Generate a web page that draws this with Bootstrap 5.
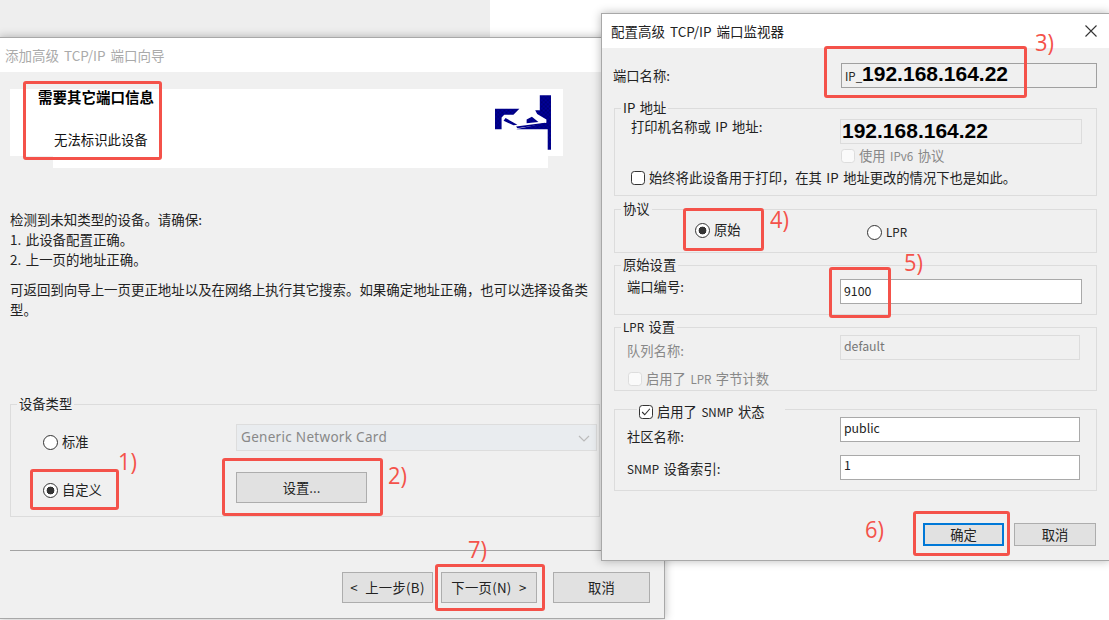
<!DOCTYPE html>
<html lang="zh">
<head>
<meta charset="utf-8">
<title>TCP/IP 端口</title>
<link href="https://cdn.jsdelivr.net/npm/bootstrap@5.3.0/dist/css/bootstrap.min.css" rel="stylesheet">
<style>
html,body{margin:0;height:100%;background:#fff;overflow:hidden}
body{font-family:"Noto Sans CJK SC","Liberation Sans",sans-serif;font-size:13.3px;line-height:16px;color:#222;word-spacing:1.5px}
.desk{width:1109px;height:620px;overflow:hidden}
.backwin{left:0;top:0;width:490px;height:37px;background:#eee}
.win{background:#f0f0f0;border:1px solid #a8a8a8;box-shadow:0 0 9px rgba(0,0,0,.28)}
.wiz{left:-1px;top:37px;width:666px;height:582px}
.dlg{left:601px;top:13px;width:509px;height:548px}
.tbar{background:#fff;height:34px;padding-top:9px;font-size:13.5px;word-spacing:2px}
.wiz .tbar{color:#aaa;padding-left:5px}
.dlg .tbar{color:#222;padding-left:9px;padding-right:12px}
.closex{width:12px;height:12px;margin-top:2px}
.banner{margin:17px 0 0 10px;width:553px;height:67px;background:#fff}
.strip{margin-left:53px;width:495px;height:12px;background:#fff}
.hd1{font-weight:700;font-size:14.5px;color:#000;margin:0 0 0 28px}
.hd2{font-size:13.4px;color:#111;margin:26px 0 0 44px}
.logo{width:56px;height:56px;margin:6px 12px 0 0}
.wizcopy{margin:41px 0 0 10px;width:590px;font-size:13.45px;line-height:20px}
.wizcopy p{margin:0}
.wizcopy p+p{margin-top:10px}
.gbox{border:1px solid #dcdcdc;position:relative}
.lgd{position:absolute;background:#f0f0f0;padding:0 2px;white-space:nowrap;left:6px;top:-9px}
.lat{font-size:11.6px}
.wgroup{margin:85px 0 0 10px;width:590px;height:113px;display:grid;grid-template-columns:225px 361px;grid-template-rows:27px 31px;row-gap:21px;padding-top:19px}
.rcell{padding-left:32px}
.rcell1{margin-top:10px}
.rcell2{margin-top:10px}
.wr,.wc{margin:0!important;width:14px;height:14px;flex:none;background-color:#fff;border:1px solid #333;border-radius:0;opacity:1!important;box-shadow:none!important}
.wr{border-radius:50%;width:15px;height:15px}
.wr:checked{background-color:#fff;border-color:#333;background-image:radial-gradient(circle,#333 0 3.6px,#fff 4.2px)}
.wc:checked{background-color:#fff;border-color:#333;background-image:url("data:image/svg+xml,%3Csvg xmlns='http://www.w3.org/2000/svg' viewBox='0 0 14 14'%3E%3Cpath d='M2.5 7l3 3.2 6-7' fill='none' stroke='%23333' stroke-width='1.3'/%3E%3C/svg%3E")}
.wc:disabled{background-color:#fafafa;border-color:#ddd}
.lab{margin-left:4px;white-space:nowrap}
.combo{height:27px;padding:0 20px 0 4px;font-size:13.5px;letter-spacing:.3px;color:#888;background-color:#f3f3f3;border:1px solid #ddd;border-radius:0;font-family:"Noto Sans","Liberation Sans",sans-serif;background-image:url("data:image/svg+xml,%3Csvg xmlns='http://www.w3.org/2000/svg' viewBox='0 0 12 12'%3E%3Cpath d='M1 4l5 5 5-5' fill='none' stroke='%23bbb' stroke-width='1.2'/%3E%3C/svg%3E");background-size:12px;background-position:right 6px center;opacity:1}
.wbtn{background:#e1e1e1;border:1px solid #adadad;border-radius:0;color:#222;font-size:13.3px;padding:0;line-height:16px}
.setbtn{width:131px;height:31px}
.hr1{margin:33px 0 0 10px;border-top:1px solid #a3a3a3;height:0}
.wfoot{margin:21px 0 0 342px;gap:8px}
.wfoot .wbtn{height:31px;width:91px;letter-spacing:.3px;word-spacing:4px}
.wfoot .nextb{width:96px}
.wfoot .cancelb{width:97px;margin-left:8px}
.dbody{padding:15px 12px 0 12px}
.portlbl{margin-left:-1px}
.ctl{height:25px;border:1px solid #a9a9a9;border-radius:0;padding:0 3px;font-size:12.3px;line-height:21px;background:#fff;color:#222;box-shadow:none!important}
.ctl.off{background:#f0f0f0;border-color:#dcdcdc;color:#777;opacity:1}
.up2{padding-bottom:2px}
.up4{padding-bottom:4px}
.up6{padding-bottom:6px}
.portip{width:256px;background:#f0f0f0;display:flex;align-items:center;white-space:nowrap;overflow:hidden;border-color:#a0a0a0}
.ipx{font-family:"Liberation Sans",Arial,sans-serif;font-weight:700;font-size:21px;color:#000;line-height:21px;word-spacing:0}
.ipa{margin-top:-5px}
.ipb{margin:-2px 0 0 1px}
.ipsm{font-size:11.5px;line-height:16px;padding-top:1px}
.g1{margin-top:20px;height:88px;padding:10px 0 0 16px}
.g2{margin-top:13px;height:44px;padding:12px 0 0 80px}
.g3{margin-top:12px;height:50px;padding:13px 0 0 12px}
.g4{margin-top:12px;height:64px;padding:7px 0 0 12px}
.g5{margin-top:18px;height:82px;padding:7px 0 0 12px}
.frow{display:grid;grid-template-columns:213px 240px;align-items:start}
.g1 .frow{grid-template-columns:209px 242px}
.g3 .frow{grid-template-columns:213px 242px}
.off-t{color:#888}
.v6{margin:4px 0 0 210px}
.always{margin-top:6px}
.rawr{width:172px}
.lprr{margin-top:2px}
.lbl4{margin-top:8px}
.cb4{margin-top:11px;margin-left:1px}
.lbl51{margin-top:12px}
.lbl52{margin-top:6px}
.frow+.frow{margin-top:10px}
.lgdchk{left:22px;top:-6px;padding:0 20px 0 2px;display:flex;align-items:center}
.dfoot{margin-top:32px;padding-right:1px;gap:10px}
.dfoot .wbtn{height:23px;width:82px}
.dfoot .okb{width:81px;border:2px solid #0078d7}
.ann{position:absolute;border:3px solid #f4524a;border-radius:3px}
.a-head{left:23px;top:81px;width:139px;height:79px}
.a-cust{left:30px;top:469px;width:89px;height:41px}
.a-set{left:222px;top:458px;width:161px;height:58px}
.a-next{left:435px;top:564px;width:110px;height:47px}
.a-port{left:824px;top:46px;width:203px;height:52px}
.a-raw{left:683px;top:208px;width:81px;height:43px}
.a-num{left:829px;top:267px;width:62px;height:51px}
.a-ok{left:913px;top:511px;width:97px;height:45px}
.num{position:absolute;color:#f4524a;font-family:"Open Sans","Noto Sans",sans-serif;font-size:23px;line-height:26px;font-weight:400;word-spacing:0;transform-origin:left center;transform:scaleX(.95)}
.n1{left:118px;top:448px}
.n2{left:388px;top:462px}
.n3{left:1035px;top:29px}
.n4{left:770px;top:206px}
.n5{left:904px;top:249px}
.n6{left:865px;top:516px}
.n7{left:468px;top:536px}
</style>
</head>
<body>
<div class="desk position-relative">
  <div class="backwin position-absolute"></div>

  <div class="win wiz position-absolute">
    <div class="tbar">添加高级 TCP/IP 端口向导</div>
    <div class="banner d-flex justify-content-between">
      <div>
        <div class="hd1">需要其它端口信息</div>
        <div class="hd2">无法标识此设备</div>
      </div>
      <svg class="logo" viewBox="44 27 170 168" aria-hidden="true">
        <defs><pattern id="dith" width="4" height="4" patternUnits="userSpaceOnUse"><rect width="4" height="4" fill="#0000a8"/><rect width="2" height="2" fill="#00006a"/><rect x="2" y="2" width="2" height="2" fill="#00006a"/></pattern></defs>
        <path fill="url(#dith)" d="M44 68H118L100 86H72L64 94V130H44Z"/>
        <path fill="url(#dith)" d="M180 27H214V192H204V130H108L200 110V100L172 84L166 72H180Z"/>
        <path fill="url(#dith)" d="M76 96L112 116L100 118L70 104Z"/>
        <path fill="url(#dith)" d="M108 122L196 110V114L112 127Z"/>
        <path fill="url(#dith)" d="M140 100L156 92L176 108L140 112Z"/>
      </svg>
    </div>
    <div class="strip"></div>
    <div class="wizcopy">
      <p>检测到未知类型的设备。请确保:<br>1. 此设备配置正确。<br>2. 上一页的地址正确。</p>
      <p>可返回到向导上一页更正地址以及在网络上执行其它搜索。如果确定地址正确&#xFF0C;也可以选择设备类型。</p>
    </div>
    <div class="gbox wgroup">
      <span class="lgd">设备类型</span>
      <div class="rcell rcell1 d-flex align-items-center align-self-start"><input class="form-check-input wr" type="radio" name="devtype" aria-label="标准"><span class="lab">标准</span></div>
      <select class="form-select combo" disabled aria-label="设备"><option>Generic Network Card</option></select>
      <div class="rcell rcell2 d-flex align-items-center align-self-start"><input class="form-check-input wr" type="radio" name="devtype" checked aria-label="自定义"><span class="lab">自定义</span></div>
      <div><button type="button" class="btn wbtn setbtn">设置...</button></div>
    </div>
    <div class="hr1"></div>
    <div class="wfoot d-flex">
      <button type="button" class="btn wbtn">&lt; 上一步(B)</button>
      <button type="button" class="btn wbtn nextb">下一页(N) &gt;</button>
      <button type="button" class="btn wbtn cancelb">取消</button>
    </div>
  </div>

  <div class="win dlg position-absolute">
    <div class="tbar d-flex justify-content-between">
      <span>配置高级 TCP/IP 端口监视器</span>
      <svg class="closex" viewBox="0 0 12 12" aria-hidden="true"><path d="M.5.5l11 11M11.5.5l-11 11" stroke="#333" stroke-width="1.1" fill="none"/></svg>
    </div>
    <div class="dbody">
      <div class="d-flex justify-content-between align-items-center">
        <span class="portlbl">端口名称:</span>
        <div class="form-control ctl portip"><span class="ipsm">IP_</span><span class="ipx ipa">192.168.164.22</span></div>
      </div>

      <div class="gbox g1">
        <span class="lgd">IP 地址</span>
        <div class="frow">
          <span>打印机名称或 IP 地址:</span>
          <div class="form-control ctl off d-flex align-items-center px-0"><span class="ipx ipb">192.168.164.22</span></div>
        </div>
        <div class="d-flex align-items-center v6"><input class="form-check-input wc" type="checkbox" disabled aria-label="IPv6"><span class="lab off-t">使用 <span class="lat">IPv6</span> 协议</span></div>
        <div class="d-flex align-items-center always"><input class="form-check-input wc" type="checkbox" aria-label="始终"><span class="lab">始终将此设备用于打印&#xFF0C;在其 IP 地址更改的情况下也是如此。</span></div>
      </div>

      <div class="gbox g2 d-flex align-items-start">
        <span class="lgd">协议</span>
        <div class="d-flex align-items-center rawr"><input class="form-check-input wr" type="radio" name="proto" checked aria-label="原始"><span class="lab">原始</span></div>
        <div class="d-flex align-items-center lprr"><input class="form-check-input wr" type="radio" name="proto" aria-label="LPR"><span class="lab lat">LPR</span></div>
      </div>

      <div class="gbox g3">
        <span class="lgd">原始设置</span>
        <div class="frow">
          <span>端口编号:</span>
          <input class="form-control ctl up2" type="text" value="9100" aria-label="端口编号">
        </div>
      </div>

      <div class="gbox g4">
        <span class="lgd"><span class="lat">LPR</span> 设置</span>
        <div class="frow">
          <span class="off-t lbl4">队列名称:</span>
          <input class="form-control ctl off up4" type="text" value="default" disabled aria-label="队列名称">
        </div>
        <div class="d-flex align-items-center cb4"><input class="form-check-input wc" type="checkbox" disabled aria-label="LPR 字节计数"><span class="lab off-t">启用了 <span class="lat">LPR</span> 字节计数</span></div>
      </div>

      <div class="gbox g5">
        <span class="lgd lgdchk"><input class="form-check-input wc" type="checkbox" checked aria-label="SNMP"><span class="lab">启用了 <span class="lat">SNMP</span> 状态</span></span>
        <div class="frow">
          <span class="lbl51">社区名称:</span>
          <input class="form-control ctl up4" type="text" value="public" aria-label="社区名称">
        </div>
        <div class="frow">
          <span class="lbl52"><span class="lat">SNMP</span> 设备索引:</span>
          <input class="form-control ctl up6" type="text" value="1" aria-label="设备索引">
        </div>
      </div>

      <div class="dfoot d-flex justify-content-end">
        <button type="button" class="btn wbtn okb">确定</button>
        <button type="button" class="btn wbtn">取消</button>
      </div>
    </div>
  </div>

  <div class="ann a-head"></div>
  <div class="ann a-cust"></div>
  <div class="ann a-set"></div>
  <div class="ann a-next"></div>
  <div class="ann a-port"></div>
  <div class="ann a-raw"></div>
  <div class="ann a-num"></div>
  <div class="ann a-ok"></div>
  <span class="num n1">1)</span>
  <span class="num n2">2)</span>
  <span class="num n3">3)</span>
  <span class="num n4">4)</span>
  <span class="num n5">5)</span>
  <span class="num n6">6)</span>
  <span class="num n7">7)</span>
</div>
<script src="https://cdn.jsdelivr.net/npm/bootstrap@5.3.0/dist/js/bootstrap.bundle.min.js"></script>
</body>
</html>
